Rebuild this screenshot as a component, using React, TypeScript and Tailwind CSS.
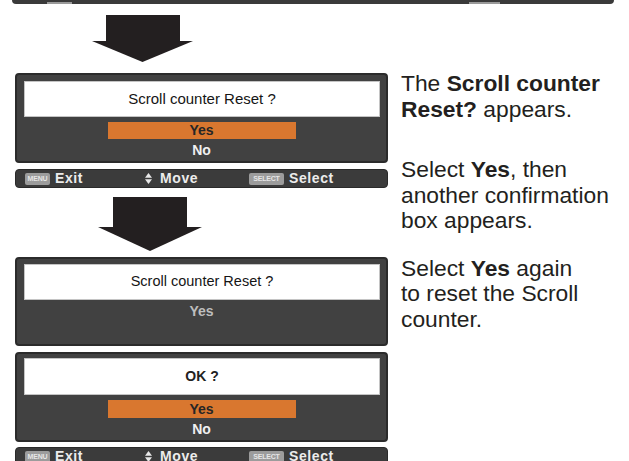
import React from "react";

const sans = { fontFamily: '"Liberation Sans", Arial, sans-serif' };

function UpDown() {
  return (
    <svg width="7" height="11" viewBox="0 0 7 11" className="block">
      <polygon points="3.5,0 7,4.8 0,4.8" fill="#e8e8e8" />
      <polygon points="0,6.2 7,6.2 3.5,11" fill="#e8e8e8" />
    </svg>
  );
}

function Badge({ label, w }: { label: string; w: string }) {
  return (
    <div
      className={`${w} h-[12px] rounded-[2px] bg-[#9c9c9c] flex items-center justify-center text-[7px] font-bold leading-none tracking-[-0.2px] text-[#e6e6e6]`}
    >
      {label}
    </div>
  );
}

function Footer({ className }: { className: string }) {
  return (
    <div
      className={`${className} ml-[15px] w-[373px] h-[19px] rounded-[4px] bg-[#3b3b3b] border border-[#2a2a2a] flex items-center text-[14px] font-bold tracking-[0.6px] text-[#ececec]`}
    >
      <div className="w-[129px] flex items-center pl-[9px] gap-[5px]">
        <Badge label="MENU" w="w-[25px]" />
        <span>Exit</span>
      </div>
      <div className="w-[104px] flex items-center gap-[8px]">
        <UpDown />
        <span>Move</span>
      </div>
      <div className="flex items-center gap-[5px]">
        <Badge label="SELECT" w="w-[35px]" />
        <span>Select</span>
      </div>
    </div>
  );
}

function Arrow({
  w,
  h,
  rx1,
  rx2,
  ry,
  className,
}: {
  w: number;
  h: number;
  rx1: number;
  rx2: number;
  ry: number;
  className: string;
}) {
  return (
    <svg width={w} height={h} viewBox={`0 0 ${w} ${h}`} className={`block ${className}`}>
      <rect x={rx1} y={0} width={rx2 - rx1} height={ry} fill="#231f20" />
      <polygon points={`0,${ry} ${w},${ry} ${w / 2},${h}`} fill="#231f20" />
    </svg>
  );
}

export default function App() {
  return (
    <div className="w-[629px] h-[461px] overflow-hidden bg-white" style={sans}>
      {/* top bar remnant */}
      <div className="ml-[12px] w-[602px] h-[4px] bg-[#3a3a3a] rounded-b-[4px] flex items-end">
        <div className="ml-[35px] w-[25px] h-[2px] bg-[#9a9a9a]" />
        <div className="ml-[397px] w-[31px] h-[2px] bg-[#9a9a9a]" />
      </div>

      <div className="flex">
        {/* left column */}
        <div className="w-[401px] shrink-0">
          <Arrow w={101} h={47} rx1={14} rx2={88} ry={26} className="ml-[92px] mt-[11px]" />

          {/* dialog 1 */}
          <div className="mt-[11px] ml-[15px] w-[373px] h-[90px] rounded-[4px] bg-[#414141] border-2 border-[#2b2b2b]">
            <div className="mt-[6px] ml-[7px] mr-[6px] h-[36px] bg-white border border-[#c4c4c4] flex items-center justify-center text-[15px] text-[#151515]">
              Scroll counter Reset ?
            </div>
            <div className="mt-[5px] mx-auto w-[188px] h-[17px] bg-[#d9772f] flex items-center justify-center text-[14px] font-bold text-[#262626]">
              Yes
            </div>
            <div className="mt-[2px] h-[18px] flex items-center justify-center text-[14px] font-bold text-[#f0f0f0]">
              No
            </div>
          </div>

          <Footer className="mt-[6px]" />

          <Arrow w={104} h={54} rx1={15} rx2={89} ry={30} className="ml-[98px] mt-[9px]" />

          {/* dialog 2 */}
          <div className="mt-[6px] ml-[15px] w-[373px] h-[89px] rounded-[4px] bg-[#414141] border-2 border-[#2b2b2b]">
            <div className="mt-[5px] ml-[7px] mr-[6px] h-[36px] bg-white border border-[#c4c4c4] flex items-center justify-center text-[14.5px] text-[#151515]">
              Scroll counter Reset ?
            </div>
            <div className="mt-[2px] h-[18px] flex items-center justify-center text-[14px] font-bold text-[#bdbdbd]">
              Yes
            </div>
          </div>

          {/* dialog 3 */}
          <div className="mt-[6px] ml-[15px] w-[373px] h-[90px] rounded-[4px] bg-[#414141] border-2 border-[#2b2b2b]">
            <div className="mt-[4px] ml-[7px] mr-[6px] h-[37px] bg-white border border-[#c4c4c4] flex items-center justify-center text-[14px] font-bold text-[#222]">
              OK ?
            </div>
            <div className="mt-[5px] mx-auto w-[188px] h-[18px] bg-[#d9772f] flex items-center justify-center text-[14px] font-bold text-[#262626]">
              Yes
            </div>
            <div className="mt-[2px] h-[18px] flex items-center justify-center text-[14px] font-bold text-[#f0f0f0]">
              No
            </div>
          </div>

          <Footer className="mt-[5px]" />
        </div>

        {/* right column */}
        <div className="pt-[67px] text-[22.8px] leading-[25.5px] text-[#231f20] whitespace-nowrap">
          <p>
            The <b>Scroll counter</b>
            <br />
            <b>Reset?</b> appears.
          </p>
          <p className="mt-[35px]">
            Select <b>Yes</b>, then
            <br />
            another confirmation
            <br />
            box appears.
          </p>
          <p className="mt-[22px]">
            Select <b>Yes</b> again
            <br />
            to reset the Scroll
            <br />
            counter.
          </p>
        </div>
      </div>
    </div>
  );
}
